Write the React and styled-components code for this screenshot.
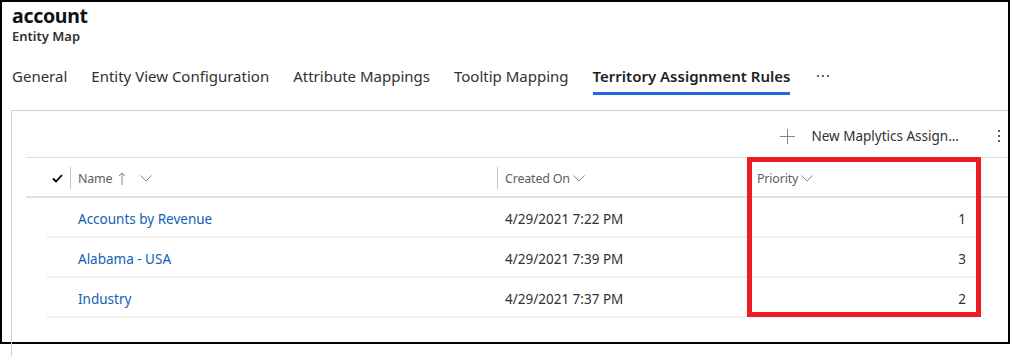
import React from 'react'
import styled, { createGlobalStyle } from 'styled-components'

const GlobalStyle = createGlobalStyle`
  html {
    overflow: hidden;
  }
  html, body {
    margin: 0;
    padding: 0;
    background: #fff;
  }
  body {
    min-height: 363px;
    font-family: "Noto Sans", "Open Sans", sans-serif;
    color: #323130;
  }
`

const Frame = styled.div`
  box-sizing: border-box;
  width: 1010px;
  height: 344px;
  border: 2px solid #000;
  display: flex;
  flex-direction: column;
`

const Header = styled.div`
  padding: 3px 0 0 10px;
`

const Title = styled.div`
  font-size: 19.5px;
  font-weight: 700;
  line-height: 22px;
  letter-spacing: -0.3px;
  color: #111;
`

const Subtitle = styled.div`
  font-size: 13px;
  font-weight: 600;
  line-height: 18px;
  color: #323130;
`

const Tabs = styled.div`
  display: flex;
  align-items: flex-start;
  margin-top: 15px;
`

const Tab = styled.div`
  font-size: 15px;
  line-height: 20px;
  font-weight: ${p => (p.$active ? 600 : 400)};
  color: ${p => (p.$active ? '#201f1e' : '#323130')};
  padding: 6px 0 6px;
  margin: 0 12px 0 ${p => p.$lead || 12}px;
  border-bottom: 3px solid ${p => (p.$active ? '#2266e3' : 'transparent')};
  white-space: nowrap;
`

const More = styled.div`
  display: flex;
  align-items: center;
  height: 32px;
  margin-left: 14px;
`

const Card = styled.div`
  margin: 15px 0 0 9px;
  height: 245px;
  flex-shrink: 0;
  border-top: 1px solid #cfcfcf;
  border-left: 1px solid #cfcfcf;
`

const Toolbar = styled.div`
  height: 46px;
  box-sizing: border-box;
  padding: 4px 8px 0 0;
  display: flex;
  align-items: center;
  justify-content: flex-end;
`

const NewButton = styled.div`
  display: flex;
  align-items: center;
  gap: 16px;
  font-size: 13.5px;
  color: #323130;
  margin-right: 39px;
`

const Kebab = styled.div`
  display: flex;
  flex-direction: column;
  gap: 3px;
`

const Dot = styled.span`
  width: 2px;
  height: 2px;
  background: #605e5c;
`

const Grid = styled.div`
  position: relative;
  padding-left: 14px;
`

const HeadRow = styled.div`
  display: flex;
  align-items: center;
  box-sizing: border-box;
  height: 41px;
  padding-top: 2px;
  border-top: 1px solid #e0e0e0;
  border-bottom: 2px solid #e1e1e1;
`

const CheckCell = styled.div`
  width: ${p => p.$w}px;
  display: flex;
  justify-content: flex-end;
  padding-right: 7px;
  box-sizing: border-box;
`

const HeadCell = styled.div`
  width: ${p => (p.$w ? `${p.$w}px` : 'auto')};
  flex: ${p => (p.$w ? 'none' : 1)};
  display: flex;
  align-items: center;
  height: 22px;
  box-sizing: border-box;
  padding-left: 7px;
  border-left: 1px solid ${p => (p.$sep ? '#c8c6c4' : 'transparent')};
  font-size: 12.5px;
  letter-spacing: -0.2px;
  color: #605e5c;
`

const Icon = styled.span`
  display: inline-flex;
  align-items: center;
  margin-left: ${p => p.$space}px;
`

const Row = styled.div`
  display: flex;
  align-items: center;
  box-sizing: border-box;
  height: 40px;
  padding-top: 3px;
  margin: 0 32px 0 20px;
  border-bottom: 2px solid #f3f2f1;
`

const Cell = styled.div`
  width: ${p => (p.$w ? `${p.$w}px` : 'auto')};
  flex: ${p => (p.$w ? 'none' : 1)};
  box-sizing: border-box;
  padding: 0 10px 0 8px;
  text-align: ${p => (p.$right ? 'right' : 'left')};
  font-size: 13.5px;
  color: ${p => (p.$link ? '#1160b7' : '#323130')};
  white-space: nowrap;
`

const Highlight = styled.div`
  position: absolute;
  left: 735px;
  top: 0;
  width: 234px;
  height: 160px;
  box-sizing: border-box;
  border: 5px solid #ed1c24;
  pointer-events: none;
`

const Chevron = () => (
  <svg width="12" height="7" viewBox="0 0 12 7">
    <polyline points="0.5,0.5 6,6 11.5,0.5" fill="none" stroke="#8a8886" strokeWidth="1" />
  </svg>
)

const UpArrow = () => (
  <svg width="8" height="13" viewBox="0 0 8 13">
    <line x1="4" y1="1" x2="4" y2="13" stroke="#8a8886" strokeWidth="1" />
    <polyline points="1,4 4,1 7,4" fill="none" stroke="#8a8886" strokeWidth="1" />
  </svg>
)

const Check = () => (
  <svg width="11" height="9" viewBox="0 0 11 9">
    <polyline points="1,4.5 4,7.5 10,1" fill="none" stroke="#000" strokeWidth="1.8" />
  </svg>
)

const Plus = () => (
  <svg width="15" height="15" viewBox="0 0 15 15">
    <line x1="7.5" y1="0" x2="7.5" y2="15" stroke="#8a8886" strokeWidth="1" />
    <line x1="0" y1="7.5" x2="15" y2="7.5" stroke="#8a8886" strokeWidth="1" />
  </svg>
)

const Ellipsis = () => (
  <svg width="14" height="4" viewBox="0 0 14 4">
    <circle cx="2" cy="2" r="1" fill="#323130" />
    <circle cx="7" cy="2" r="1" fill="#323130" />
    <circle cx="12" cy="2" r="1" fill="#323130" />
  </svg>
)

const rules = [
  { name: 'Accounts by Revenue', created: '4/29/2021 7:22 PM', priority: 1 },
  { name: 'Alabama - USA', created: '4/29/2021 7:39 PM', priority: 3 },
  { name: 'Industry', created: '4/29/2021 7:37 PM', priority: 2 }
]

const tabs = [
  'General',
  'Entity View Configuration',
  'Attribute Mappings',
  'Tooltip Mapping',
  'Territory Assignment Rules'
]

export default function App () {
  return (
    <>
      <GlobalStyle />
      <Frame>
        <Header>
          <Title>account</Title>
          <Subtitle>Entity Map</Subtitle>
        </Header>
        <Tabs>
          {tabs.map((t, i) => (
            <Tab key={t} $active={i === tabs.length - 1} $lead={i === 0 ? 10 : 12}>
              {t}
            </Tab>
          ))}
          <More><Ellipsis /></More>
        </Tabs>
        <Card>
          <Toolbar>
            <NewButton>
              <Plus />
              <span>New Maplytics Assign...</span>
            </NewButton>
            <Kebab><Dot /><Dot /><Dot /></Kebab>
          </Toolbar>
          <Grid>
            <HeadRow>
              <CheckCell $w={44}><Check /></CheckCell>
              <HeadCell $w={427} $sep>
                <span>Name</span>
                <Icon $space={6}><UpArrow /></Icon>
                <Icon $space={14}><Chevron /></Icon>
              </HeadCell>
              <HeadCell $w={252} $sep>
                <span>Created On</span>
                <Icon $space={3}><Chevron /></Icon>
              </HeadCell>
              <HeadCell>
                <span>Priority</span>
                <Icon $space={3}><Chevron /></Icon>
              </HeadCell>
            </HeadRow>
            {rules.map(r => (
              <Row key={r.name}>
                <Cell $w={24} />
                <Cell $w={427} $link>{r.name}</Cell>
                <Cell $w={252}>{r.created}</Cell>
                <Cell $right>{r.priority}</Cell>
              </Row>
            ))}
            <Highlight />
          </Grid>
        </Card>
      </Frame>
    </>
  )
}
